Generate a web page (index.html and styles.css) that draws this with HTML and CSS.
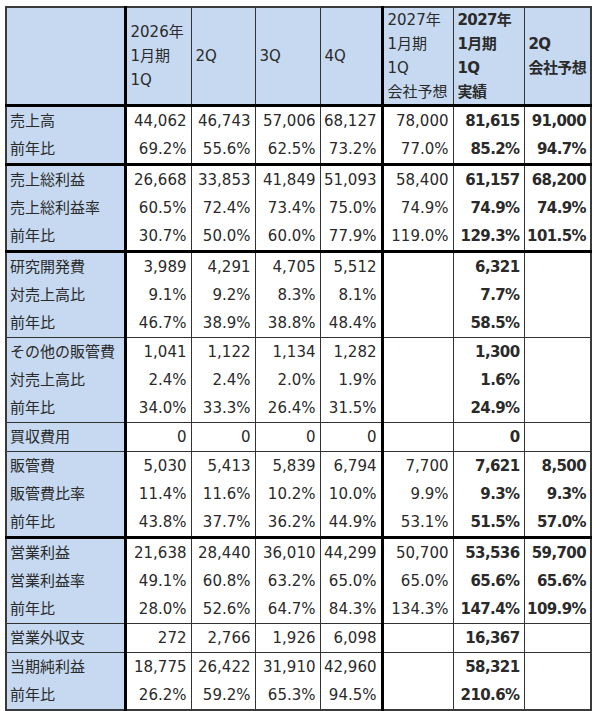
FILE: index.html
```html
<!DOCTYPE html>
<html lang="ja">
<head>
<meta charset="utf-8">
<link rel="stylesheet" href="styles.css">
</head>
<body>
<table class="fin">
  <colgroup>
    <col class="w-label"><col class="w-q1"><col class="w-q2"><col class="w-q3"><col class="w-q4"><col class="w-f"><col class="w-a"><col class="w-n">
  </colgroup>
  <thead>
    <tr>
      <th class="lbl"></th>
      <th class="sep">2026年<br>1月期<br>1Q</th>
      <th>2Q</th>
      <th>3Q</th>
      <th>4Q</th>
      <th class="sep">2027年<br>1月期<br>1Q<br>会社予想</th>
      <th class="b">2027年<br>1月期<br>1Q<br>実績</th>
      <th class="b">2Q<br>会社予想</th>
    </tr>
  </thead>
  <tbody class="thick">
    <tr><td class="lbl">売上高</td><td class="sep">44,062</td><td>46,743</td><td>57,006</td><td>68,127</td><td class="sep">78,000</td><td class="b">81,615</td><td class="b">91,000</td></tr>
    <tr><td class="lbl">前年比</td><td class="sep">69.2%</td><td>55.6%</td><td>62.5%</td><td>73.2%</td><td class="sep">77.0%</td><td class="b">85.2%</td><td class="b">94.7%</td></tr>
  </tbody>
  <tbody class="thick">
    <tr><td class="lbl">売上総利益</td><td class="sep">26,668</td><td>33,853</td><td>41,849</td><td>51,093</td><td class="sep">58,400</td><td class="b">61,157</td><td class="b">68,200</td></tr>
    <tr><td class="lbl">売上総利益率</td><td class="sep">60.5%</td><td>72.4%</td><td>73.4%</td><td>75.0%</td><td class="sep">74.9%</td><td class="b">74.9%</td><td class="b">74.9%</td></tr>
    <tr><td class="lbl">前年比</td><td class="sep">30.7%</td><td>50.0%</td><td>60.0%</td><td>77.9%</td><td class="sep">119.0%</td><td class="b">129.3%</td><td class="b">101.5%</td></tr>
  </tbody>
  <tbody class="thick">
    <tr><td class="lbl">研究開発費</td><td class="sep">3,989</td><td>4,291</td><td>4,705</td><td>5,512</td><td class="sep"></td><td class="b">6,321</td><td class="b"></td></tr>
    <tr><td class="lbl">対売上高比</td><td class="sep">9.1%</td><td>9.2%</td><td>8.3%</td><td>8.1%</td><td class="sep"></td><td class="b">7.7%</td><td class="b"></td></tr>
    <tr><td class="lbl">前年比</td><td class="sep">46.7%</td><td>38.9%</td><td>38.8%</td><td>48.4%</td><td class="sep"></td><td class="b">58.5%</td><td class="b"></td></tr>
  </tbody>
  <tbody class="thin">
    <tr><td class="lbl">その他の販管費</td><td class="sep">1,041</td><td>1,122</td><td>1,134</td><td>1,282</td><td class="sep"></td><td class="b">1,300</td><td class="b"></td></tr>
    <tr><td class="lbl">対売上高比</td><td class="sep">2.4%</td><td>2.4%</td><td>2.0%</td><td>1.9%</td><td class="sep"></td><td class="b">1.6%</td><td class="b"></td></tr>
    <tr><td class="lbl">前年比</td><td class="sep">34.0%</td><td>33.3%</td><td>26.4%</td><td>31.5%</td><td class="sep"></td><td class="b">24.9%</td><td class="b"></td></tr>
  </tbody>
  <tbody class="thin">
    <tr><td class="lbl">買収費用</td><td class="sep">0</td><td>0</td><td>0</td><td>0</td><td class="sep"></td><td class="b">0</td><td class="b"></td></tr>
  </tbody>
  <tbody class="thin">
    <tr><td class="lbl">販管費</td><td class="sep">5,030</td><td>5,413</td><td>5,839</td><td>6,794</td><td class="sep">7,700</td><td class="b">7,621</td><td class="b">8,500</td></tr>
    <tr><td class="lbl">販管費比率</td><td class="sep">11.4%</td><td>11.6%</td><td>10.2%</td><td>10.0%</td><td class="sep">9.9%</td><td class="b">9.3%</td><td class="b">9.3%</td></tr>
    <tr><td class="lbl">前年比</td><td class="sep">43.8%</td><td>37.7%</td><td>36.2%</td><td>44.9%</td><td class="sep">53.1%</td><td class="b">51.5%</td><td class="b">57.0%</td></tr>
  </tbody>
  <tbody class="thick">
    <tr><td class="lbl">営業利益</td><td class="sep">21,638</td><td>28,440</td><td>36,010</td><td>44,299</td><td class="sep">50,700</td><td class="b">53,536</td><td class="b">59,700</td></tr>
    <tr><td class="lbl">営業利益率</td><td class="sep">49.1%</td><td>60.8%</td><td>63.2%</td><td>65.0%</td><td class="sep">65.0%</td><td class="b">65.6%</td><td class="b">65.6%</td></tr>
    <tr><td class="lbl">前年比</td><td class="sep">28.0%</td><td>52.6%</td><td>64.7%</td><td>84.3%</td><td class="sep">134.3%</td><td class="b">147.4%</td><td class="b">109.9%</td></tr>
  </tbody>
  <tbody class="thin">
    <tr><td class="lbl">営業外収支</td><td class="sep">272</td><td>2,766</td><td>1,926</td><td>6,098</td><td class="sep"></td><td class="b">16,367</td><td class="b"></td></tr>
  </tbody>
  <tbody class="thin">
    <tr><td class="lbl">当期純利益</td><td class="sep">18,775</td><td>26,422</td><td>31,910</td><td>42,960</td><td class="sep"></td><td class="b">58,321</td><td class="b"></td></tr>
    <tr><td class="lbl">前年比</td><td class="sep">26.2%</td><td>59.2%</td><td>65.3%</td><td>94.5%</td><td class="sep"></td><td class="b">210.6%</td><td class="b"></td></tr>
  </tbody>
</table>
</body>
</html>
```

FILE: styles.css
```css
html, body {
  margin: 0;
  padding: 0;
  background: #ffffff;
}

body {
  padding: 6px 0 0 5px;
}

.fin {
  border-collapse: collapse;
  font-family: "DejaVu Sans", "Noto Sans CJK JP", sans-serif;
  font-size: 15px;
  color: #2a2a2a;
  border: 2px solid #3a3a3a;
}

.w-label { width: 119px; }
.w-q1 { width: 66px; }
.w-q2 { width: 64px; }
.w-q3 { width: 65px; }
.w-q4 { width: 62px; }
.w-f { width: 71px; }
.w-a { width: 71px; }
.w-n { width: 67px; }

.fin th {
  background: #c6d9f0;
  font-weight: normal;
  text-align: left;
  vertical-align: middle;
  height: 96px;
  padding: 0 2px 0 4px;
  line-height: 24px;
  border-left: 1px solid #333;
  border-bottom: 3px solid #000;
  white-space: nowrap;
}

.fin td {
  height: 28px;
  padding: 0 4px 0 2px;
  line-height: 28px;
  text-align: right;
  white-space: nowrap;
  border-left: 1px solid #333;
  background: #ffffff;
}

.fin td.lbl {
  text-align: left;
  padding: 0 2px 0 3px;
  background: #c6d9f0;
}

.fin .sep {
  border-left: 3px solid #000;
}

.fin .b {
  font-weight: bold;
  letter-spacing: -0.6px;
}

.fin tbody.thick {
  border-top: 3px solid #000;
}

.fin tbody.thin {
  border-top: 1px solid #333;
}
```
